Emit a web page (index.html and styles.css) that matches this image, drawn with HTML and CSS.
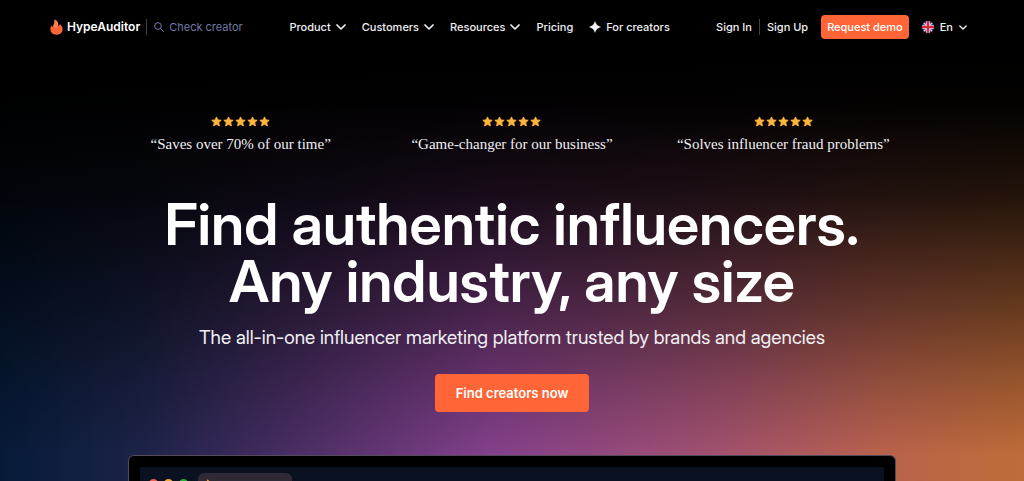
FILE: index.html
```
<!DOCTYPE html>
<html lang="en">
<head>
    <meta charset="UTF-8">
    <meta name="viewport" content="width=device-width, initial-scale=1.0">
    <title>HypeAuditor | Find authentic influencers</title>
    <link rel="stylesheet" href="styles.css">
</head>
<body>
    <!-- Shared icon shapes -->
    <svg class="sprite" aria-hidden="true">
        <symbol id="chevron" viewBox="0 0 10 6">
            <path d="M1 1l4 4 4-4" fill="none" stroke="currentColor" stroke-width="1.7" stroke-linecap="round" stroke-linejoin="round"/>
        </symbol>
        <symbol id="star" viewBox="0 0 12 12">
            <path d="M6 1l1.5 3.3 3.6.4-2.7 2.5.8 3.6L6 9l-3.2 1.8.8-3.6L.9 4.7l3.6-.4z" fill="#ffb63d" stroke="#ffb63d" stroke-width="1" stroke-linejoin="round"/>
        </symbol>
    </svg>

    <header class="header">
        <div class="brand">
            <a class="logo" href="#">
                <svg class="logo-icon" viewBox="0 0 13 16" aria-hidden="true">
                    <path d="M4.3.4C8 2 8.6 4.4 8 6.9c1.2-.2 1.7-1 1.9-1.9 1.8 1.6 2.7 3.3 2.7 5.2 0 3.3-2.7 5.5-6.2 5.5C2.9 15.7.4 13.5.4 10.3c0-1.8.7-3.1 1.3-4 .2 1.2.8 1.8 1.6 2C2.9 5.9 5.5 3.6 4.3.4z" fill="#ff6537"/>
                    <path d="M4.3.4C8 2 8.6 4.4 8 6.9 6.9 8.3 5 8.7 3.3 8.3 2.9 5.9 5.5 3.6 4.3.4z" fill="#ff8058"/>
                </svg>
                <span>HypeAuditor</span>
            </a>
            <label class="search">
                <svg class="search-icon" viewBox="0 0 10 10" aria-hidden="true">
                    <circle cx="4" cy="4" r="3.3" fill="none" stroke="currentColor"/>
                    <path d="M6.5 6.5l3 3" stroke="currentColor" stroke-linecap="round"/>
                </svg>
                <input type="text" placeholder="Check creator" aria-label="Check creator">
            </label>
        </div>

        <nav class="nav">
            <button type="button">Product <svg class="chevron"><use href="#chevron"/></svg></button>
            <button type="button">Customers <svg class="chevron"><use href="#chevron"/></svg></button>
            <button type="button">Resources <svg class="chevron"><use href="#chevron"/></svg></button>
            <a href="#">Pricing</a>
            <a href="#">
                <svg class="spark" viewBox="0 0 12 12" aria-hidden="true">
                    <path d="M6 0c1 3.4 2.6 5 6 6-3.4 1-5 2.6-6 6-1-3.4-2.6-5-6-6 3.4-1 5-2.6 6-6z" fill="currentColor"/>
                </svg>
                For creators
            </a>
        </nav>

        <div class="account">
            <a class="sign-in" href="#">Sign In</a>
            <a class="sign-up" href="#">Sign Up</a>
            <a class="btn btn-small" href="#">Request demo</a>
            <button class="lang" type="button">
                <svg class="flag" viewBox="0 0 12 12" aria-hidden="true">
                    <clipPath id="round"><circle cx="6" cy="6" r="6"/></clipPath>
                    <g clip-path="url(#round)">
                        <path d="M0 0h12v12H0z" fill="#21468f"/>
                        <path d="M1 1l10 10M11 1L1 11" stroke="#e8b8c4" stroke-width="1.4"/>
                        <path d="M6 0v12M0 6h12" stroke="#fff" stroke-width="3.6"/>
                        <path d="M6 0v12M0 6h12" stroke="#d8263c" stroke-width="2.4"/>
                    </g>
                </svg>
                En
                <svg class="chevron chevron-small"><use href="#chevron"/></svg>
            </button>
        </div>
    </header>

    <main class="hero">
        <div class="quotes">
            <div class="quote">
                <div class="stars">
                    <svg><use href="#star"/></svg><svg><use href="#star"/></svg><svg><use href="#star"/></svg><svg><use href="#star"/></svg><svg><use href="#star"/></svg>
                </div>
                <p>“Saves over 70% of our time”</p>
            </div>
            <div class="quote">
                <div class="stars">
                    <svg><use href="#star"/></svg><svg><use href="#star"/></svg><svg><use href="#star"/></svg><svg><use href="#star"/></svg><svg><use href="#star"/></svg>
                </div>
                <p>“Game-changer for our business”</p>
            </div>
            <div class="quote">
                <div class="stars">
                    <svg><use href="#star"/></svg><svg><use href="#star"/></svg><svg><use href="#star"/></svg><svg><use href="#star"/></svg><svg><use href="#star"/></svg>
                </div>
                <p>“Solves influencer fraud problems”</p>
            </div>
        </div>

        <h1>Find authentic influencers.<br>Any industry, any size</h1>
        <p class="lead">The all-in-one influencer marketing platform trusted by brands and agencies</p>
        <a class="btn btn-large" href="#">Find creators now</a>

        <!-- Top of the browser mockup -->
        <div class="device">
            <div class="screen">
                <span class="dot dot-red"></span>
                <span class="dot dot-yellow"></span>
                <span class="dot dot-green"></span>
                <div class="tab">
                    <svg class="tab-icon" viewBox="0 0 13 16" aria-hidden="true">
                        <path d="M4.3.4C8 2 8.6 4.4 8 6.9c1.2-.2 1.7-1 1.9-1.9 1.8 1.6 2.7 3.3 2.7 5.2 0 3.3-2.7 5.5-6.2 5.5S.4 13.5.4 10.3C.4 6 5.5 3.6 4.3.4z" fill="#ff9a2e"/>
                    </svg>
                </div>
            </div>
        </div>
    </main>
</body>
</html>
```

FILE: styles.css
```
:root {
    --orange: #ff6537;
    --text: #f0f0f4;
    --muted: #727ba3;
    --line: #414145;
}

* {
    margin: 0;
    padding: 0;
    box-sizing: border-box;
}

body {
    font-family: Inter, "Liberation Sans", sans-serif;
    font-size: 11px;
    font-weight: 500;
    line-height: 16px;
    color: var(--text);
    background-color: #000;
}

a {
    color: inherit;
    text-decoration: none;
}

button {
    font: inherit;
    color: inherit;
    background: none;
    border: none;
    cursor: pointer;
}

svg {
    display: block;
    flex: none;
}

.sprite {
    position: absolute;
    width: 0;
    height: 0;
}

/* Header */
.header {
    display: flex;
    align-items: center;
    justify-content: space-between;
    height: 54px;
    padding: 0 57px 0 50px;
    white-space: nowrap;
    background-color: #000;
}

.brand,
.logo,
.search,
.nav,
.nav a,
.nav button,
.account,
.lang {
    display: flex;
    align-items: center;
}

.logo {
    gap: 4px;
    font-size: 12px;
    font-weight: 600;
    color: #fff;
}

.logo-icon {
    width: 13px;
    height: 16px;
}

.search {
    gap: 5px;
    margin-left: 6px;
    padding-left: 7px;
    border-left: 1px solid var(--line);
    color: var(--muted);
}

.search-icon {
    width: 10px;
    height: 10px;
}

.search input {
    width: 74px;
    font: inherit;
    font-weight: 400;
    color: inherit;
    background: none;
    border: none;
    outline: none;
}

.search input::placeholder {
    color: inherit;
    opacity: 1;
}

.nav {
    gap: 16px;
}

.nav button {
    gap: 5px;
}

.nav a {
    gap: 5px;
}

.chevron {
    width: 10px;
    height: 6px;
}

.chevron-small {
    width: 8px;
    height: 5px;
}

.spark {
    width: 12px;
    height: 12px;
}

.sign-up {
    margin-left: 7px;
    padding-left: 7px;
    border-left: 1px solid var(--line);
}

.btn {
    display: inline-block;
    color: #fff;
    background-color: var(--orange);
    border-radius: 4px;
}

.btn-small {
    margin: 0 13px 0 13px;
    padding: 4px 6px;
}

.btn-large {
    padding: 11px 21px;
    font-size: 13px;
    font-weight: 600;
}

.lang {
    gap: 6px;
}

.flag {
    width: 12px;
    height: 12px;
}

/* Hero */
.hero {
    display: flex;
    flex-direction: column;
    align-items: center;
    height: calc(100vh - 54px);
    min-height: 427px;
    padding-top: 62px;
    overflow: hidden;
    text-align: center;
    background:
        linear-gradient(to bottom, #000 0%, rgba(0, 0, 0, 0.98) 12%, rgba(0, 0, 0, 0.82) 33%, rgba(0, 0, 0, 0.46) 60%, rgba(0, 0, 0, 0.2) 78%, transparent 94%),
        linear-gradient(to right, #061a38 0%, #1c2348 14%, #472d62 28%, #84408c 48%, #a2516f 70%, #b9624d 86%, #bf6c38 100%);
}

.quotes {
    display: grid;
    grid-template-columns: repeat(3, 1fr);
    width: 100%;
    max-width: 814px;
}

.quote p {
    margin-top: 8px;
    font-family: Georgia, "Liberation Serif", serif;
    font-size: 15px;
    font-weight: 400;
    line-height: 18px;
}

.stars {
    display: flex;
    justify-content: center;
    gap: 1px;
}

.stars svg {
    width: 11px;
    height: 11px;
}

h1,
.lead {
    font-family: "Inter Display", Inter, "Liberation Sans", sans-serif;
}

h1 {
    margin-top: 43px;
    font-size: 58px;
    font-weight: 600;
    line-height: 57px;
    color: #fff;
}

.lead {
    margin: 16px 0 24px;
    font-size: 19px;
    font-weight: 400;
    line-height: 24px;
}

/* Browser mockup */
.device {
    flex: none;
    width: 75%;
    margin-top: 43px;
    padding: 11px 11px 0;
    background-color: #000;
    border: 1px solid #55495c;
    border-bottom: none;
    border-radius: 6px 6px 0 0;
}

.screen {
    display: flex;
    align-items: center;
    gap: 6px;
    height: 32px;
    padding: 0 9px;
    background-color: #0a1121;
}

.dot {
    width: 9px;
    height: 9px;
    border-radius: 50%;
}

.dot-red {
    background-color: #ee5c4d;
}

.dot-yellow {
    background-color: #eda82f;
}

.dot-green {
    background-color: #27ae39;
}

.tab {
    width: 94px;
    height: 20px;
    margin-left: 4px;
    padding: 6px;
    background-color: #302936;
    border-radius: 6px 6px 0 0;
}

.tab-icon {
    width: 9px;
    height: 11px;
}
```
